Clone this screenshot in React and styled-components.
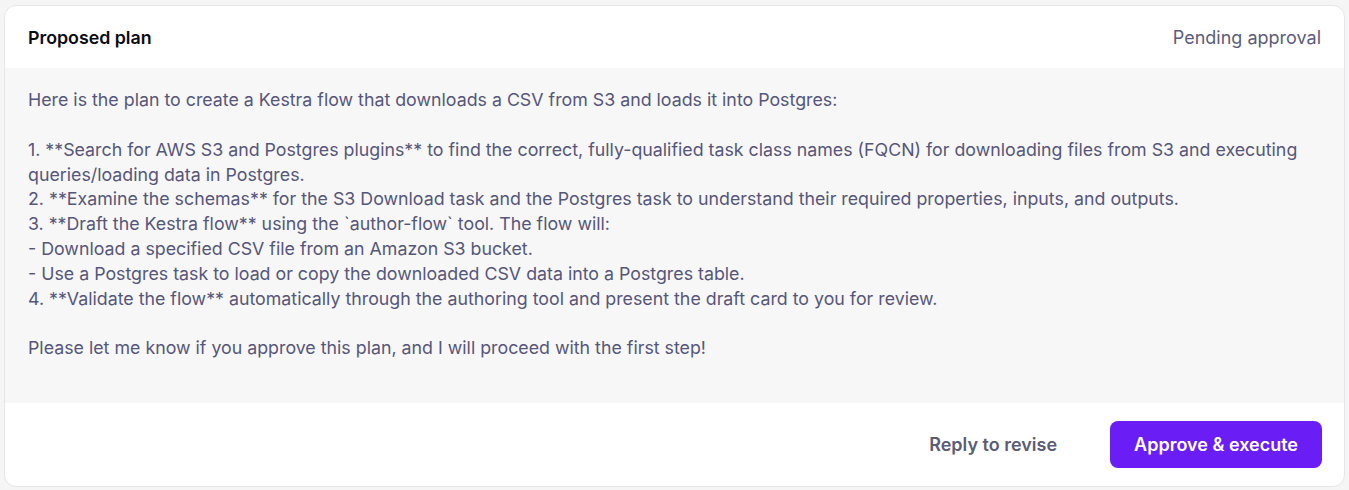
import React from "react";
import styled, { createGlobalStyle } from "styled-components";

const GlobalStyle = createGlobalStyle`
  body {
    margin: 0;
    background: #f5f5f6;
    font-family: Inter, "Noto Sans", sans-serif;
  }
`;

const planText = `Here is the plan to create a Kestra flow that downloads a CSV from S3 and loads it into Postgres:

1. **Search for AWS S3 and Postgres plugins** to find the correct, fully-qualified task class names (FQCN) for downloading files from S3 and executing queries/loading data in Postgres.
2. **Examine the schemas** for the S3 Download task and the Postgres task to understand their required properties, inputs, and outputs.
3. **Draft the Kestra flow** using the \`author-flow\` tool. The flow will:
- Download a specified CSV file from an Amazon S3 bucket.
- Use a Postgres task to load or copy the downloaded CSV data into a Postgres table.
4. **Validate the flow** automatically through the authoring tool and present the draft card to you for review.

Please let me know if you approve this plan, and I will proceed with the first step!`;

function App() {
  return (
    <>
      <GlobalStyle />
      <Page>
        <Card>
          <Header>
            <Title>Proposed plan</Title>
            <Status>Pending approval</Status>
          </Header>
          <Body>{planText}</Body>
          <Footer>
            <Button>Reply to revise</Button>
            <Button primary>Approve &amp; execute</Button>
          </Footer>
        </Card>
      </Page>
    </>
  );
}

export default App;

const Page = styled.div`
  padding: 5px 4px 3px 4px;
`;

const Card = styled.section`
  background: #ffffff;
  border: 1px solid #e6e6ea;
  border-radius: 12px;
  overflow: hidden;
`;

const Header = styled.div`
  display: flex;
  align-items: center;
  justify-content: space-between;
  height: 62px;
  padding: 0 23px 0 23px;
`;

const Title = styled.div`
  font-size: 17.8px;
  font-weight: 600;
  color: #0b0b12;
`;

const Status = styled.div`
  font-size: 18px;
  color: #5c5c7a;
`;

const Body = styled.div`
  background: #f7f7f7;
  padding: 20px 23px 42px 23px;
  font-size: 17.8px;
  line-height: 24.85px;
  color: #56567a;
  white-space: pre-wrap;
`;

const Footer = styled.div`
  display: flex;
  justify-content: flex-end;
  align-items: center;
  gap: 29px;
  padding: 18px 22px 18px 23px;
`;

const Button = styled.button`
  font-family: Inter, "Noto Sans", sans-serif;
  font-size: 18px;
  font-weight: 600;
  height: 47px;
  padding: 0 24px;
  border: none;
  border-radius: 8px;
  cursor: pointer;
  background: ${(p) => (p.primary ? "#6a1ef5" : "transparent")};
  color: ${(p) => (p.primary ? "#ffffff" : "#5c5c75")};
`;
